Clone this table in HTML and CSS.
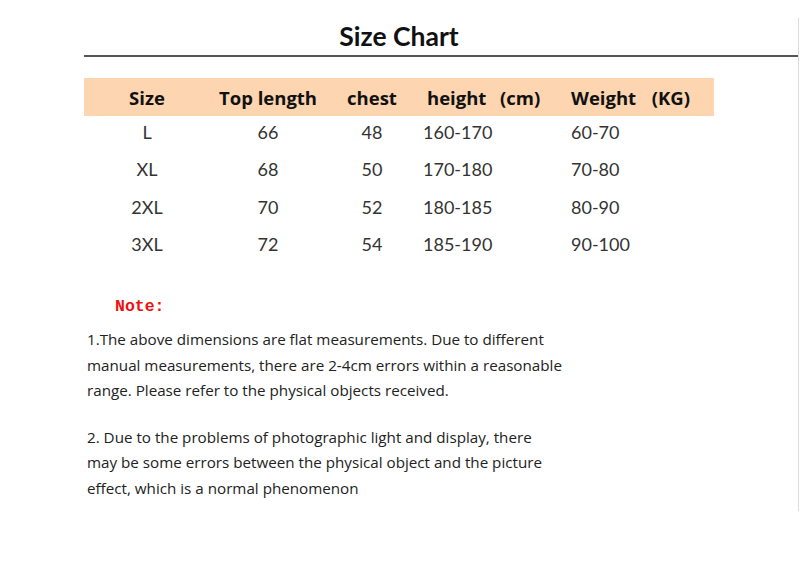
FILE: index.html
```html
<!DOCTYPE html>
<html lang="en">
<head>
<meta charset="utf-8">
<title>Size Chart</title>
<link rel="stylesheet" href="styles.css">
</head>
<body>
<div class="page">
  <h1 class="title">Size Chart</h1>
  <div class="rule"></div>
  <div class="chart">
    <div class="row head">
      <div class="c c1">Size</div>
      <div class="c c2">Top length</div>
      <div class="c c3">chest</div>
      <div class="c c4">height&nbsp;&nbsp;(cm)</div>
      <div class="c c5">Weight&nbsp;&nbsp;(KG)</div>
    </div>
    <div class="row">
      <div class="c c1">L</div><div class="c c2">66</div><div class="c c3">48</div><div class="c c4">160-170</div><div class="c c5">60-70</div>
    </div>
    <div class="row">
      <div class="c c1">XL</div><div class="c c2">68</div><div class="c c3">50</div><div class="c c4">170-180</div><div class="c c5">70-80</div>
    </div>
    <div class="row">
      <div class="c c1">2XL</div><div class="c c2">70</div><div class="c c3">52</div><div class="c c4">180-185</div><div class="c c5">80-90</div>
    </div>
    <div class="row">
      <div class="c c1">3XL</div><div class="c c2">72</div><div class="c c3">54</div><div class="c c4">185-190</div><div class="c c5">90-100</div>
    </div>
  </div>
  <div class="note">Note:</div>
  <p class="para">1.The above dimensions are flat measurements. Due to different<br>manual measurements, there are 2-4cm errors within a reasonable<br>range. Please refer to the physical objects received.</p>
  <p class="para second">2. Due to the problems of photographic light and display, there<br>may be some errors between the physical object and the picture<br>effect, which is a normal phenomenon</p>
</div>
</body>
</html>
```
FILE: styles.css
```css
html, body {
  margin: 0;
  padding: 0;
  background: #ffffff;
}
body {
  font-family: Lato, "Open Sans", sans-serif;
  color: #222;
}
.page {
  box-sizing: border-box;
  width: 799px;
  height: 493px;
  margin-top: 18px;
  border-right: 1px solid #dcdcdc;
}
.title {
  margin: 0;
  text-align: center;
  font-size: 26.5px;
  line-height: 36px;
  font-weight: 700;
  color: #111;
}
.rule {
  margin: 1px 0 0 84px;
  height: 2px;
  background: #555;
}
.chart {
  margin-top: 21px;
  margin-left: 84px;
  width: 630px;
}
.row {
  display: grid;
  grid-template-columns: 126px 116px 92px 147px 149px;
  height: 37.5px;
  align-items: center;
  font-size: 18px;
  color: #333;
}
.row.head {
  height: 38px;
  margin-bottom: -3px;
  background: #fdd5b1;
  font-family: "Open Sans", sans-serif;
  font-weight: 700;
  font-size: 18.5px;
  color: #111;
}
.c1, .c2, .c3 { text-align: center; }
.c4 { padding-left: 5px; }
.c5 { padding-left: 6px; }
.head .c4 { padding-left: 9px; word-spacing: 2px; }
.head .c5 { word-spacing: 3px; }
.note {
  margin: 35px 0 0 115px;
  font-family: "Liberation Mono", monospace;
  font-weight: 700;
  font-size: 16.5px;
  line-height: 18px;
  color: #ee1111;
}
.para {
  margin: 11px 0 0 87px;
  font-family: "Open Sans", sans-serif;
  font-size: 15.2px;
  line-height: 25.5px;
  color: #222;
  white-space: nowrap;
}
.para.second {
  margin-top: 21px;
}
```
